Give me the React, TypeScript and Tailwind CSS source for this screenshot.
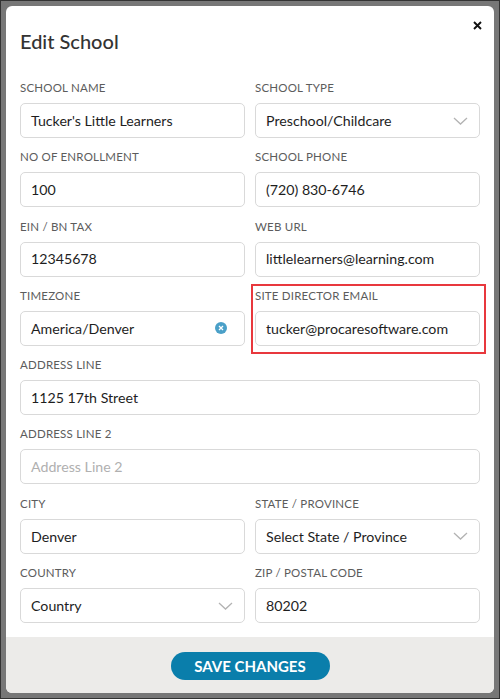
import React from "react";

const font = { fontFamily: "Lato, 'Noto Sans', sans-serif" };

function Chevron() {
  return (
    <svg width="15" height="8" viewBox="0 0 15 8" className="absolute right-[11px] top-1/2 -translate-y-1/2">
      <polyline points="1,1 7.5,7 14,1" fill="none" stroke="#b3b3b3" strokeWidth="1.3" />
    </svg>
  );
}

function Field({
  label,
  value,
  placeholder,
  select,
  clear,
  highlight,
}: {
  label: string;
  value?: string;
  placeholder?: string;
  select?: boolean;
  clear?: boolean;
  highlight?: boolean;
}) {
  return (
    <div className="relative flex flex-col">
      {highlight && (
        <div className="absolute -top-[4px] -left-[4px] -right-[6px] -bottom-[8px] border-2 border-[#e8383d] pointer-events-none" />
      )}
      <div className="h-[16px] leading-[16px] text-[11.5px] text-[#5c5c5c] tracking-[0.2px]">{label}</div>
      <div className="relative mt-[7px] h-[35px] rounded-[5px] border border-[#d9d9d9] bg-white flex items-center px-[10px]">
        {value ? (
          <span className="text-[14.2px] text-[#1e1e1e]">{value}</span>
        ) : (
          <span className="text-[14.2px] text-[#b0b0b0]">{placeholder}</span>
        )}
        {select && <Chevron />}
        {clear && (
          <span className="absolute right-[17px] top-1/2 -translate-y-1/2 w-[12px] h-[12px] rounded-full bg-[#4aa0c8] flex items-center justify-center">
            <svg width="6" height="6" viewBox="0 0 6 6">
              <path d="M1 1L5 5M5 1L1 5" stroke="white" strokeWidth="1.3" />
            </svg>
          </span>
        )}
      </div>
    </div>
  );
}

export default function App() {
  return (
    <div style={font} className="w-[500px] h-[699px] bg-[#777777] border border-[#333333] p-[5px]">
      <div className="h-full bg-white rounded-[6px] flex flex-col overflow-hidden relative">
        <button className="absolute right-[11px] top-[13px] w-[12px] h-[12px] flex items-center justify-center">
          <svg width="9" height="9" viewBox="0 0 9 9">
            <path d="M1 1L8 8M8 1L1 8" stroke="#111" strokeWidth="1.9" />
          </svg>
        </button>
        <div className="pt-[23px] px-[14px] h-[24px] box-content">
          <h1 className="text-[20px] leading-[24px] text-[#333333] font-medium">Edit School</h1>
        </div>
        <div className="flex-1 px-[14px] pt-[27px]">
          <div className="grid grid-cols-2 gap-x-[10px] gap-y-[11.3px]">
            <Field label="SCHOOL NAME" value="Tucker's Little Learners" />
            <Field label="SCHOOL TYPE" value="Preschool/Childcare" select />
            <Field label="NO OF ENROLLMENT" value="100" />
            <Field label="SCHOOL PHONE" value="(720) 830-6746" />
            <Field label="EIN / BN TAX" value="12345678" />
            <Field label="WEB URL" value="littlelearners@learning.com" />
            <Field label="TIMEZONE" value="America/Denver" clear />
            <Field label="SITE DIRECTOR EMAIL" value="tucker@procaresoftware.com" highlight />
            <div className="col-span-2">
              <Field label="ADDRESS LINE" value="1125 17th Street" />
            </div>
            <div className="col-span-2">
              <Field label="ADDRESS LINE 2" placeholder="Address Line 2" />
            </div>
            <Field label="CITY" value="Denver" />
            <Field label="STATE / PROVINCE" value="Select State / Province" select />
            <Field label="COUNTRY" value="Country" select />
            <Field label="ZIP / POSTAL CODE" value="80202" />
          </div>
        </div>
        <div className="h-[56px] bg-[#ecebe9] flex justify-center pt-[15px]">
          <button className="w-[159px] h-[28px] rounded-full bg-[#0a7eab] text-white text-[15px] font-bold leading-[28px]">
            SAVE CHANGES
          </button>
        </div>
      </div>
    </div>
  );
}
